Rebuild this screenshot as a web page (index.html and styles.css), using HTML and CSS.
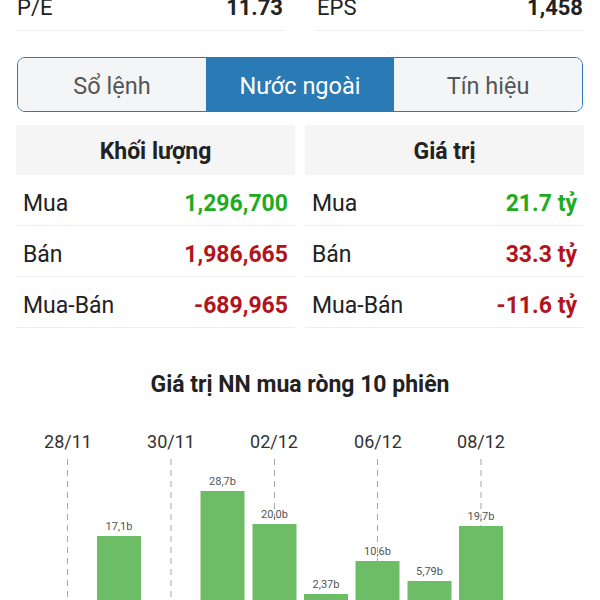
FILE: index.html
```html
<!DOCTYPE html>
<html>
    <head>
        <meta charset="utf-8">
        <link rel="stylesheet" href="styles.css">
    </head>
    <body>
        <div class="stats">
            <div class="stat">
                <span class="stat-label">P/E</span>
                <span class="stat-value">11.73</span>
            </div>
            <div class="stat">
                <span class="stat-label">EPS</span>
                <span class="stat-value">1,458</span>
            </div>
        </div>

        <div class="tabs">
            <div class="tab">Sổ lệnh</div>
            <div class="tab active">Nước ngoài</div>
            <div class="tab">Tín hiệu</div>
        </div>

        <div class="tables">
            <div class="table">
                <div class="table-head">Khối lượng</div>
                <div class="row">
                    <span>Mua</span>
                    <span class="num up">1,296,700</span>
                </div>
                <div class="row">
                    <span>Bán</span>
                    <span class="num down">1,986,665</span>
                </div>
                <div class="row">
                    <span>Mua-Bán</span>
                    <span class="num down">-689,965</span>
                </div>
            </div>
            <div class="table">
                <div class="table-head">Giá trị</div>
                <div class="row">
                    <span>Mua</span>
                    <span class="num up">21.7 tỷ</span>
                </div>
                <div class="row">
                    <span>Bán</span>
                    <span class="num down">33.3 tỷ</span>
                </div>
                <div class="row">
                    <span>Mua-Bán</span>
                    <span class="num down">-11.6 tỷ</span>
                </div>
            </div>
        </div>

        <h2 class="chart-title">Giá trị NN mua ròng 10 phiên</h2>

        <svg class="chart" width="600" height="260" viewBox="0 0 600 260">
            <!-- date markers -->
            <g class="date">
                <text x="68" y="48">28/11</text>
                <text x="171" y="48">30/11</text>
                <text x="274" y="48">02/12</text>
                <text x="378" y="48">06/12</text>
                <text x="481" y="48">08/12</text>
            </g>
            <g class="guide">
                <line x1="67.5" y1="59" x2="67.5" y2="260" />
                <line x1="171" y1="59" x2="171" y2="260" />
                <line x1="274.5" y1="59" x2="274.5" y2="124" />
                <line x1="377.5" y1="59" x2="377.5" y2="161" />
                <line x1="481" y1="59" x2="481" y2="126" />
            </g>
            <!-- bars, zero line sits just below the fold -->
            <g class="bar">
                <rect x="97" y="136" width="44" height="67" />
                <rect x="200.5" y="91" width="44" height="112" />
                <rect x="252.5" y="124" width="44" height="79" />
                <rect x="304" y="194" width="44" height="9" />
                <rect x="355.5" y="161" width="44" height="42" />
                <rect x="407.5" y="181" width="44" height="22" />
                <rect x="459" y="126" width="44" height="77" />
            </g>
            <g class="bar-label">
                <text x="119" y="130">17,1b</text>
                <text x="222.5" y="85">28,7b</text>
                <text x="274.5" y="118">20,0b</text>
                <text x="326" y="188">2,37b</text>
                <text x="377.5" y="155">10,6b</text>
                <text x="429.5" y="175">5,79b</text>
                <text x="481" y="120">19,7b</text>
            </g>
        </svg>
    </body>
</html>
```

FILE: styles.css
```css
html {
    overflow: hidden;
}
body {
    margin: 0;
    background-color: white;
    color: #222222;
    font-family: Roboto, "Noto Sans", sans-serif;
}

.stats {
    display: flex;
    gap: 30px;
    padding: 0 15px;
    margin-top: -5px;
}
.stat {
    flex: 1;
    display: flex;
    justify-content: space-between;
    font-size: 22px;
    line-height: 26px;
    padding: 0 2px 9px 2px;
    border-bottom: 1px solid #eeeeee;
}
.stat-value {
    font-weight: bold;
}

.tabs {
    display: flex;
    margin: 26px 17px 0;
    border: 1.5px solid #2a7ab6;
    border-radius: 8px;
    overflow: hidden;
    height: 53px;
}
.tab {
    flex: 1;
    display: flex;
    align-items: center;
    justify-content: center;
    padding-top: 2px;
    background-color: #f4f5f6;
    color: #555555;
    font-size: 23.5px;
}
.tab.active {
    background-color: #2a7ab6;
    color: white;
}

.tables {
    display: grid;
    grid-template-columns: 1fr 1fr;
    gap: 10px;
    padding: 0 16px;
    margin-top: 13px;
}
.table-head {
    height: 50px;
    display: flex;
    align-items: center;
    justify-content: center;
    padding-top: 2px;
    box-sizing: border-box;
    background-color: #f5f5f5;
    font-size: 23px;
    font-weight: bold;
}
.row {
    height: 51px;
    box-sizing: border-box;
    display: flex;
    align-items: center;
    justify-content: space-between;
    padding: 6px 7px 0;
    border-bottom: 1px solid #eeeeee;
    font-size: 23px;
}
.row:first-of-type {
    height: 53px;
}
.num {
    font-weight: bold;
}
.up {
    color: #1eab22;
}
.down {
    color: #b2141c;
}

.chart-title {
    margin: 44px 0 0;
    font-size: 23px;
    line-height: 26px;
    text-align: center;
    color: #222222;
}
.chart {
    display: block;
    margin-top: 2px;
    font-family: Roboto, "Noto Sans", sans-serif;
}
.date text {
    font-size: 18px;
    fill: #333333;
    text-anchor: middle;
}
.guide line {
    stroke: #a8a8a8;
    stroke-width: 1;
    stroke-dasharray: 6 5;
}
.bar rect {
    fill: #6dbd66;
}
.bar-label text {
    font-size: 11px;
    fill: #555555;
    text-anchor: middle;
}
```
